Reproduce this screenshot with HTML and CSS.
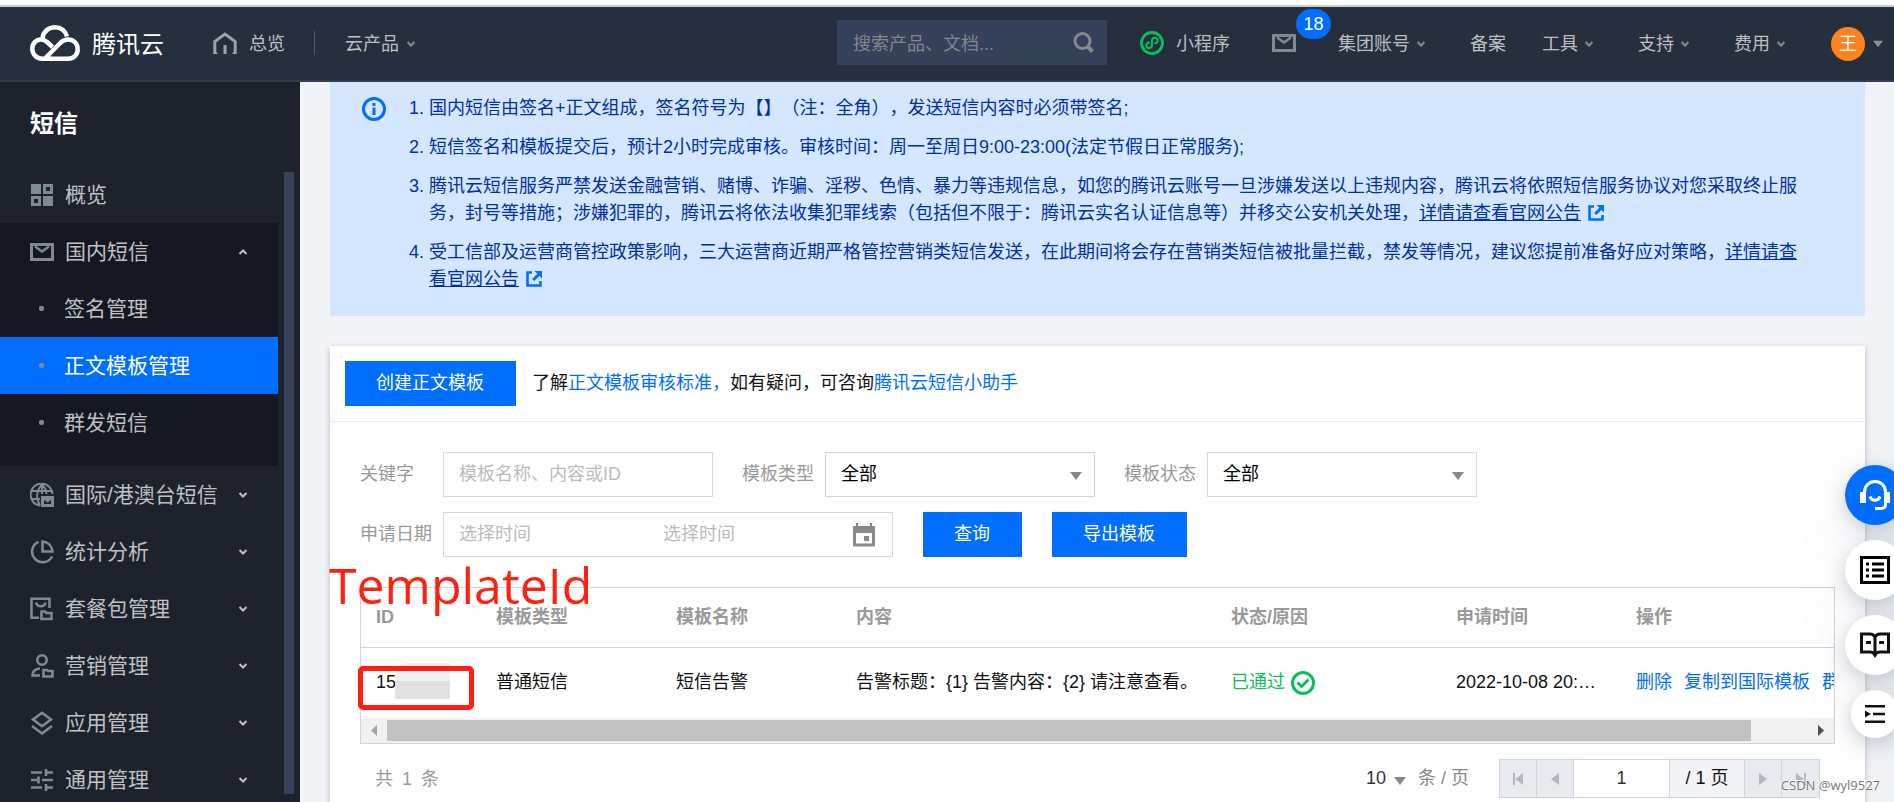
FILE: index.html
```html
<!DOCTYPE html>
<html lang="zh-CN">
<head>
<meta charset="utf-8">
<title>短信 - 正文模板管理</title>
<link rel="stylesheet" href="styles.css">
</head>
<body>
<svg class="sprite" aria-hidden="true">
  <symbol id="chev" viewBox="0 0 10 10"><path d="M1.5 3 5 6.500 8.500 3" fill="none" stroke="currentColor" stroke-width="2"/></symbol>
  <symbol id="tri" viewBox="0 0 12 8"><path d="M0 0h12L6 8z" fill="currentColor"/></symbol>
  <symbol id="mail" viewBox="0 0 24 18"><path d="M1.500 1.500h21v15h-21z" fill="none" stroke="currentColor" stroke-width="3"/><path d="M5 3.500 12 8.500 19 3.500" fill="none" stroke="currentColor" stroke-width="2.500"/></symbol>
  <symbol id="ext" viewBox="0 0 16 16"><path d="M6 1.500H1.500v13h13V10" fill="none" stroke="currentColor" stroke-width="2.600"/><path d="M8.500 0H16v7.500l-2.600-2.600-5.200 5.200-2.100-2.100L11.300 2.800z" fill="currentColor"/></symbol>
</svg>
<header class="topbar">
  <a class="brand" href="#" aria-label="腾讯云">
    <svg width="50" height="36" viewBox="0 0 50 36" fill="none" stroke="#fff" stroke-width="4.500"><path d="M37 11.500C35.500 6 31 2.300 25 2.300c-6.500 0-11.700 4.500-12.500 10.700"/><path d="M22.500 22 17 17c-2-1.800-3.500-2.500-6-2.500-5 0-8.700 4-8.700 9.200s4 10 9.700 10h26c5.500 0 9.700-4 9.700-9.500s-4-9.700-9.500-9.700c-3.500 0-6 1.500-8.500 4L15 33.500"/></svg>
    <span>腾讯云</span>
  </a>
  <a class="home" href="#"><svg width="24" height="22" viewBox="0 0 24 22" fill="none" stroke="#9ba3a5" stroke-width="3"><path d="M4.500 22H1.800V9.500L12 2l10.200 7.500V22h-2.700M12 13v9"/></svg><span>总览</span></a>
  <a class="products" href="#">云产品<svg class="chev"><use href="#chev"/></svg></a>
  <form class="search"><input type="text" aria-label="搜索" placeholder="搜索产品、文档..."><button type="button" aria-label="搜索"><svg width="22" height="22" viewBox="0 0 22 22" fill="none" stroke="#87898c"><circle cx="9.500" cy="9" r="7.500" stroke-width="3"/><path d="m14.500 14.500 5 5" stroke-width="4"/></svg></button></form>
  <a class="mini" href="#"><svg width="24" height="24" viewBox="0 0 24 24" fill="none" stroke="#0abf5b"><circle cx="12" cy="12" r="10.500" stroke-width="2.800"/><path d="M9 11.500a2.800 2.800 0 1 0 3 2.800V9.500a2.800 2.800 0 1 1 3 2.800" stroke-width="2" stroke-linecap="round"/></svg><span>小程序</span></a>
  <a class="inbox" href="#" aria-label="消息"><svg width="24" height="18"><use href="#mail"/></svg><span class="badge">18</span></a>
  <nav class="topnav">
    <a class="more" href="#">集团账号<svg class="chev"><use href="#chev"/></svg></a>
    <a href="#">备案</a>
    <a class="more" href="#">工具<svg class="chev"><use href="#chev"/></svg></a>
    <a class="more" href="#">支持<svg class="chev"><use href="#chev"/></svg></a>
    <a class="more" href="#">费用<svg class="chev"><use href="#chev"/></svg></a>
  </nav>
  <button class="account" type="button"><span class="avatar">王</span><svg width="10" height="8"><use href="#tri"/></svg></button>
</header>
<div class="shell">
  <aside class="side">
    <h1>短信</h1>
    <nav class="menu">
      <a class="item" href="#"><svg width="24" height="24" viewBox="0 0 24 24" fill="currentColor"><path d="M1 1h10v10H1zM13 13h10v10H13z"/><path fill-rule="evenodd" d="M13 1h10v10H13zm3 3v4h4V4zM1 13h10v10H1zm3 3v4h4v-4z"/></svg><span>概览</span></a>
      <div class="group">
        <button class="item" type="button"><svg width="24" height="18"><use href="#mail"/></svg><span>国内短信</span><svg class="chev up"><use href="#chev"/></svg></button>
        <a class="sub" href="#">签名管理</a>
        <a class="sub active" href="#">正文模板管理</a>
        <a class="sub" href="#">群发短信</a>
      </div>
      <button class="item" type="button"><svg width="24" height="24" viewBox="0 0 24 24" fill="none" stroke="currentColor" stroke-width="2"><path d="M10 22.500A11 11 0 1 1 22.500 11M10 22.500C6 16 6 8 12 1.500M12 1.500c3 3 4.500 6 4.500 9.500M2 8h20M2 16h8M12 1.500V11"/><path d="M11 13h13v11H11z" fill="currentColor" stroke="none"/><path d="m14 17 3.500 2.500L21 17v4h-7z" fill="#1e222d" stroke="none"/></svg><span>国际/港澳台短信</span><svg class="chev"><use href="#chev"/></svg></button>
      <button class="item" type="button"><svg width="24" height="24" viewBox="0 0 24 24" fill="none" stroke="currentColor" stroke-width="2.600"><path d="M8.500 1.900a10.600 10.600 0 1 0 13.600 14.600"/><path d="M12.500 1.500c5.500.5 9.500 4.500 10 10h-10z"/></svg><span>统计分析</span><svg class="chev"><use href="#chev"/></svg></button>
      <button class="item" type="button"><svg width="24" height="24" viewBox="0 0 24 24" fill="none" stroke="currentColor" stroke-width="2.600"><path d="M9 20.700H1.500v-19h18V11M6 5.500c1 5 8.500 5 9.500 0"/><path d="M11.500 14.500H15l1.500 1.500h5v6h-10z"/></svg><span>套餐包管理</span><svg class="chev"><use href="#chev"/></svg></button>
      <button class="item" type="button"><svg width="24" height="24" viewBox="0 0 24 24" fill="none" stroke="currentColor" stroke-width="2.600"><circle cx="12" cy="6" r="4.700"/><path d="M10 14.500c-5 .5-7.500 2.500-7.500 7h7.500"/><path d="M13.500 16H17l1 1h4.500v5.500h-9z"/></svg><span>营销管理</span><svg class="chev"><use href="#chev"/></svg></button>
      <button class="item" type="button"><svg width="24" height="24" viewBox="0 0 24 24" fill="none" stroke="currentColor" stroke-width="2.600"><path d="m12 1.800 9 6.700-9 6.700-9-6.700zM2 15l10 7.500L22 15"/></svg><span>应用管理</span><svg class="chev"><use href="#chev"/></svg></button>
      <button class="item" type="button"><svg width="24" height="24" viewBox="0 0 24 24" fill="none" stroke="currentColor" stroke-width="2.600"><path d="M1 4.500h11M15 4.500h8M1 12h6M12 12h11M1 19.500h11M15 19.500h8M16 1v7M8.500 8.500v7M16 16v7"/></svg><span>通用管理</span><svg class="chev"><use href="#chev"/></svg></button>
    </nav>
    <div class="side-thumb"></div>
  </aside>
  <main class="main">
    <section class="notice">
      <svg width="24" height="24" viewBox="0 0 24 24"><circle cx="12" cy="12" r="10.500" fill="none" stroke="#006eff" stroke-width="3"/><path d="M10.500 6h3v3h-3zM10.500 10.500h3V18h-3z" fill="#006eff"/></svg>
      <ol>
        <li>国内短信由签名+正文组成，签名符号为【】（注：全角），发送短信内容时必须带签名;</li>
        <li>短信签名和模板提交后，预计2小时完成审核。审核时间：周一至周日9:00-23:00(法定节假日正常服务);</li>
        <li>腾讯云短信服务严禁发送金融营销、赌博、诈骗、淫秽、色情、暴力等违规信息，如您的腾讯云账号一旦涉嫌发送以上违规内容，腾讯云将依照短信服务协议对您采取终止服务，封号等措施；涉嫌犯罪的，腾讯云将依法收集犯罪线索（包括但不限于：腾讯云实名认证信息等）并移交公安机关处理，<a href="#">详情请查看官网公告</a><svg class="ext"><use href="#ext"/></svg></li>
        <li>受工信部及运营商管控政策影响，三大运营商近期严格管控营销类短信发送，在此期间将会存在营销类短信被批量拦截，禁发等情况，建议您提前准备好应对策略，<a href="#">详情请查看官网公告</a><svg class="ext"><use href="#ext"/></svg></li>
      </ol>
    </section>
    <section class="card">
      <div class="card-head">
        <button class="btn" type="button">创建正文模板</button>
        <p>了解<a href="#">正文模板审核标准，</a>如有疑问，可咨询<a href="#">腾讯云短信小助手</a></p>
      </div>
      <div class="card-body">
        <form class="filters">
          <div class="row selects">
            <div class="field"><label for="kw">关键字</label><input id="kw" class="box" type="text" placeholder="模板名称、内容或ID"></div>
            <div class="field"><label for="type">模板类型</label><div class="picker"><select id="type" class="box"><option>全部</option></select><svg width="12" height="8"><use href="#tri"/></svg></div></div>
            <div class="field"><label for="state">模板状态</label><div class="picker"><select id="state" class="box"><option>全部</option></select><svg width="12" height="8"><use href="#tri"/></svg></div></div>
          </div>
          <div class="row">
            <div class="field"><label for="from">申请日期</label>
              <div class="range"><input id="from" type="text" placeholder="选择时间"><input type="text" aria-label="结束时间" placeholder="选择时间"><svg width="22" height="24" viewBox="0 0 22 24"><path fill="#888" fill-rule="evenodd" d="M0 3h3V0h2v3h12V0h2v3h3v20.500H0zM3 10v10.500h16V10zm8 3h5v5h-5z"/></svg></div></div>
            <button class="btn" type="button">查询</button>
            <button class="btn" type="button">导出模板</button>
          </div>
        </form>
        <div class="grid">
          <div class="grid-view">
            <table>
              <colgroup><col class="c-id"><col class="c-mid"><col class="c-mid"><col class="c-text"><col class="c-state"><col class="c-mid"><col class="c-ops"></colgroup>
              <thead><tr><th>ID</th><th>模板类型</th><th>模板名称</th><th>内容</th><th>状态/原因</th><th>申请时间</th><th>操作</th></tr></thead>
              <tbody><tr><td>15</td><td>普通短信</td><td>短信告警</td><td>告警标题：{1} 告警内容：{2} 请注意查看。</td><td><span class="passed">已通过<svg width="24" height="24" viewBox="0 0 24 24" fill="none" stroke="#0abf5b" stroke-width="3"><circle cx="12" cy="12" r="10.500"/><path d="m6.500 11.500 4 4 7-7"/></svg></span></td><td>2022-10-08 20:…</td><td><span class="ops"><a href="#">删除</a><a href="#">复制到国际模板</a><a href="#">群发</a></span></td></tr></tbody>
            </table>
          </div>
          <div class="hbar"><svg width="6" height="11" viewBox="0 0 6 11"><path d="M6 0v11L0 5.500z" fill="#a3a3a3"/></svg><div class="track"><div class="thumb"></div></div><svg width="6" height="11" viewBox="0 0 6 11"><path d="M0 0v11l6-5.500z" fill="#505050"/></svg></div>
          <div class="mosaic"></div>
          <div class="mark"></div>
          <div class="mark-text">TemplateId</div>
        </div>
        <div class="paging">
          <div class="total"><span>共</span><span>1</span><span>条</span></div>
          <div class="size"><select aria-label="每页条数"><option>10</option></select><svg width="12" height="8"><use href="#tri"/></svg><span>条 / 页</span></div>
          <div class="pager">
            <button type="button" aria-label="首页"><svg width="10" height="12" viewBox="0 0 10 12"><path d="M0 0h2v12H0zM10 0v12L2.500 6z" fill="currentColor"/></svg></button>
            <button type="button" aria-label="上一页"><svg width="8" height="12" viewBox="0 0 8 12"><path d="M8 0v12L0 6z" fill="currentColor"/></svg></button>
            <input type="text" aria-label="页码" value="1">
            <span>/ 1 页</span>
            <button type="button" aria-label="下一页"><svg width="8" height="12" viewBox="0 0 8 12"><path d="M0 0v12l8-6z" fill="currentColor"/></svg></button>
            <button type="button" aria-label="末页"><svg width="10" height="12" viewBox="0 0 10 12"><path d="M8 0h2v12H8zM0 0v12l7.500-6z" fill="currentColor"/></svg></button>
          </div>
        </div>
      </div>
    </section>
  </main>
</div>
<div class="floats">
  <button class="primary" type="button" aria-label="客服"><svg width="30" height="30" viewBox="0 0 30 30" fill="none" stroke="#fff" stroke-width="3"><path d="M4.500 13v-1C4.500 6 9 1.500 15 1.500S25.500 6 25.500 12v12q0 4.500-4.500 4.500h-6M10 16.500c1.500 5 8.500 5 10 0"/><path d="M0 12h6v11H0zM24 12h6v11h-6z" fill="#fff" stroke="none"/></svg></button>
  <button type="button" aria-label="清单"><svg width="30" height="28" viewBox="0 0 30 28" fill="none" stroke="#000" stroke-width="3"><path d="M1.500 1.500h27v25h-27zM6 8h3M12 8h12M6 14h3M12 14h12M6 20h3M12 20h12"/></svg></button>
  <button type="button" aria-label="文档"><svg width="30" height="26" viewBox="0 0 30 26" fill="none" stroke="#111" stroke-width="3"><path d="M15 5c-1-2-2.500-3-5-3H1.500v18H10c2.500 0 4 1 5 3 1-2 2.500-3 5-3h8.500V2H20c-2.500 0-4 1-5 3zv19M6 10.500h5M19 10.500h5"/></svg></button>
  <button class="small" type="button" aria-label="收起"><svg width="20" height="18" viewBox="0 0 20 18"><path d="M0 0h20v2.500H0zM8 7.700h12v2.500H8zM0 15.500h20V18H0zM0 5.500 6 9l-6 3.500z" fill="#111"/></svg></button>
</div>
<div class="credit">CSDN @wyl9527</div>
</body>
</html>
```
FILE: styles.css
```css
* { box-sizing: border-box; }
body {
  margin: 0;
  height: 100vh;
  overflow: hidden;
  position: relative;
  display: flex;
  flex-direction: column;
  padding-top: 5px;
  background: #fff;
  font-family: "Liberation Sans", "Noto Sans CJK SC", sans-serif;
  font-size: 18px;
  font-weight: 400;
  line-height: 27px;
  color: #111;
  text-spacing-trim: space-all;
}
a { color: inherit; text-decoration: none; }
button, input, select { font: inherit; color: inherit; border: 0; border-radius: 0; padding: 0; margin: 0; background: none; outline: 0; }
select { appearance: none; }
svg { display: block; flex: none; }
.sprite { position: absolute; width: 0; height: 0; }
.chev { width: 10px; height: 10px; }

/* top bar */
.topbar {
  display: flex;
  align-items: center;
  flex: none;
  height: 77px;
  padding: 0 11px 2px 30px;
  border-top: 2px solid #ccc;
  border-bottom: 2px solid #333e50;
  background: #262f3e;
  color: #bdbfc2;
}
.topbar .chev { color: #878d95; }
.brand { display: flex; align-items: center; gap: 12px; font-size: 24px; color: #fff; }
.brand span, .home span, .mini span, .products, .topnav, .search input { padding-top: 3px; }
.home { display: flex; align-items: center; gap: 12px; margin-left: 49px; padding-right: 29px; line-height: 21px; border-right: 1px solid #515966; }
.products { display: flex; align-items: center; gap: 7px; margin-left: 30px; }
.search { display: flex; align-items: center; width: 270px; height: 45px; margin-left: auto; padding: 0 12px 0 16px; background: #34425a; }
.search input { flex: 1; min-width: 0; }
.search input::placeholder { color: #85878b; }
.mini { display: flex; align-items: center; gap: 12px; margin-left: 33px; }
.inbox { position: relative; margin: 0 42px; color: #808b91; }
.badge { position: absolute; left: 24px; top: -25px; width: 35px; line-height: 30px; border-radius: 15px; background: #006eff; color: #fff; text-align: center; }
.topnav { display: flex; gap: 36px; }
.topnav a { display: flex; align-items: center; gap: 6px; }
.topnav .more { padding-right: 8px; }
.account { display: flex; align-items: center; gap: 8px; margin: 2px 0 0 37px; color: #8e9091; }
.avatar { width: 34px; line-height: 34px; border-radius: 17px; background: #ff8220; color: #fff; text-align: center; }

.shell { display: flex; flex: 1; min-height: 0; }

/* sidebar */
.side { position: relative; flex: none; width: 300px; padding-right: 22px; overflow: hidden; background: #1e222d; color: #bfc1c4; font-size: 21px; }
.side h1 { margin: 0; padding: 24px 30px; font-size: 24px; line-height: 36px; font-weight: 700; color: #fff; }
.menu { display: flex; flex-direction: column; }
.item { display: flex; align-items: center; gap: 11px; width: 100%; height: 57px; padding: 0 30px; text-align: left; }
.item svg { color: #7f8a92; }
.item .chev { margin-left: auto; color: #bfc1c4; }
.item .up { transform: rotate(180deg); }
.group { padding-bottom: 15px; background: #151823; }
.sub { display: flex; align-items: center; gap: 20px; height: 57px; padding-left: 39px; }
.sub::before { content: ""; width: 5px; height: 5px; border-radius: 2px; background: #7f8a92; }
.active { background: #006eff; color: #fff; }
.side-thumb { position: absolute; right: 6px; top: 90px; bottom: 8px; width: 10px; background: #36425a; }

/* content */
.main { flex: 1; min-width: 0; padding: 0 29px 0 30px; overflow: hidden; background: #f2f3f7; }
.notice { display: flex; gap: 24px; padding: 13px 60px 23px 32px; background: #d5e6ff; color: #0030a0; }
.notice > svg { margin-top: 2px; }
.notice ol { display: flex; flex-direction: column; gap: 12px; flex: 1; margin: 0; padding-left: 19px; }
.notice a { text-decoration: underline; }
.ext { display: inline-block; width: 16px; height: 16px; margin-left: 7px; vertical-align: -2px; color: #006eff; }

.card { margin-top: 30px; min-height: 600px; background: #fff; box-shadow: 0 2px 6px rgba(54, 58, 80, .3); }
.card-head { display: flex; align-items: center; gap: 16px; padding: 15px; border-bottom: 1px solid #e7e8ea; }
.card-head p { margin: 0; }
.card a { color: #006eff; }
.btn { height: 45px; padding: 0 32px 0 31px; background: #006eff; color: #fff; }
.card-body { padding: 30px; }
.filters, .row { display: flex; gap: 30px; }
.selects { gap: 29px; }
.filters { flex-direction: column; gap: 15px; }
.field { display: flex; align-items: center; }
.field label { width: 83px; color: #999; }
.box { width: 270px; height: 45px; padding: 0 15px; border: 1px solid #cfd5de; background: #fff; }
input::placeholder { color: #bbb; }
.picker { position: relative; color: #888; }
.picker select { color: #000; }
.picker svg { position: absolute; right: 13px; top: 20px; }
.range { display: flex; align-items: center; width: 450px; height: 45px; padding: 0 17px 0 15px; border: 1px solid #cfd5de; }
.range input { width: 204px; }
.range svg { margin-left: -14px; }

.grid { position: relative; margin-top: 30px; border: 1px solid #cfd5de; }
.grid-view { overflow: hidden; }
table { width: 1531px; table-layout: fixed; border-collapse: collapse; }
.c-id { width: 120px; }
.c-mid { width: 180px; }
.c-text { width: 375px; }
.c-state { width: 225px; }
th, td { padding: 0 15px; text-align: left; white-space: nowrap; }
th { height: 59px; color: #999; border-bottom: 1px solid #cfd5de; }
td { height: 71px; }
.passed { display: flex; align-items: center; gap: 6px; color: #0abf5b; }
.ops { display: flex; gap: 12px; }
.hbar { display: flex; align-items: center; gap: 10px; height: 25px; padding: 0 10px; background: #f1f1f1; }
.track { flex: 1; }
.thumb { width: 96%; height: 21px; background: #c1c1c1; }
.mosaic { position: absolute; left: 34px; top: 75px; width: 55px; height: 36px; background: linear-gradient(#f0f0f0 50%, #e1e1e1 50%); border-radius: 12px 0 0 0; }
.mark { position: absolute; left: -3px; top: 78px; width: 116px; height: 44px; border: 5px solid #ff2010; border-radius: 5px; }
.mark-text { position: absolute; left: -32px; top: -36px; font-family: "Open Sans", sans-serif; font-size: 50px; line-height: 66px; color: #ff2010; }

.paging { display: flex; align-items: center; margin-top: 15px; padding: 0 15px; color: #999; }
.total { display: flex; gap: 9px; margin-right: auto; padding-top: 2px; }
.size { display: flex; align-items: center; gap: 12px; color: #888; }
.size select { width: 20px; color: #333; }
.size svg { margin: 4px 0 0 -4px; }
.pager { display: flex; height: 39px; margin-left: 30px; border: 1px solid #cfd5de; color: #b4b8be; }
.pager > * { display: flex; align-items: center; justify-content: center; width: 37px; border-right: 1px solid #cfd5de; background: #e7eaef; }
.pager > :last-child { border-right: 0; }
.pager input { width: 96px; background: #fff; color: #333; text-align: center; }
.pager span { width: 75px; background: #f2f3f7; color: #111; }

/* floating tools */
.floats { position: absolute; right: -11px; top: 465px; display: flex; flex-direction: column; align-items: center; gap: 15px; }
.floats button { display: flex; align-items: center; justify-content: center; width: 60px; height: 60px; border-radius: 30px; background: #fff; box-shadow: 0 6px 20px rgba(54, 68, 99, .25), 0 10px 80px rgba(54, 68, 99, .08); }
.floats .primary { background: #006eff; }
.floats .small { width: 48px; height: 48px; }
.credit { position: absolute; right: 14px; bottom: 5px; font-family: "Open Sans", sans-serif; font-size: 13px; line-height: 24px; color: #777; text-shadow: -1px -1px 0 #fff; }
```
